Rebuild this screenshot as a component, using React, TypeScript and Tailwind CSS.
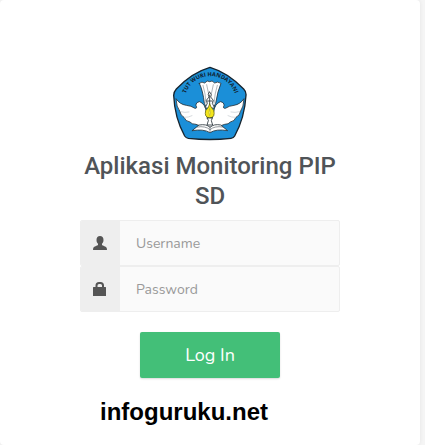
import { useState } from 'react'

function Emblem() {
  return (
    <svg viewBox="21 18 228 225" className="w-[76px] h-[75px]" role="img" aria-label="Tut Wuri Handayani">
      <defs>
        <path id="motto" d="M 62 151 A 78 78 0 1 1 210 151" />
      </defs>
      <path
        d="M135 22 Q189 38 236 87 Q244 95 243 106 Q239 174 209 228 Q206 234 198 235 Q135 242 70 235 Q63 234 59 228 Q29 174 26 106 Q26 96 34 87 Q80 38 135 22 Z"
        fill="#1b8fd8"
        stroke="#17242e"
        strokeWidth="4"
      />
      <text fill="#10202c" fontSize="17" fontWeight="700" fontFamily="'Open Sans', sans-serif" textAnchor="middle">
        <textPath href="#motto" startOffset="50%">TUT WURI HANDAYANI</textPath>
      </text>
      <g fill="#fff" stroke="#27323a" strokeWidth="2.5" strokeLinejoin="round" strokeLinecap="round">
        {/* Tail feathers */}
        <path d="M103 70 Q111 63 119 69 Q127 59 134 65 Q141 59 149 69 Q157 63 168 70 Q158 92 152 130 L145 143 L124 143 L118 130 Q114 92 103 70 Z" />
        <path d="M114 76 Q122 101 123 130 M125 74 L131 102 M145 74 L139 102 M157 76 Q149 101 147 130" fill="none" stroke="#a2a8ad" />
        {/* Wings */}
        <path d="M124 155 Q121 132 104 125 Q92 127 93 137 Q98 145 90 145 Q78 137 64 136 Q44 133 33 116 Q34 141 45 155 Q46 166 57 172 Q61 184 75 186 Q80 193 93 193 Q108 202 135 202 Q162 202 179 193 Q191 193 196 186 Q209 184 213 172 Q225 166 226 155 Q236 141 237 116 Q226 133 207 136 Q193 137 181 145 Q172 145 177 137 Q178 127 166 125 Q149 132 146 155 L142 174 L128 174 Z" />
        <path d="M47 155 Q60 159 72 156 M58 172 Q70 173 81 167 M224 155 Q210 159 198 156 M212 172 Q200 173 189 167" fill="none" stroke="#c3c9cd" strokeWidth="2" />
        {/* Temple and lamp */}
        <path d="M134 96 L139 104 L137 111 L145 121 L142 130 L149 144 L120 144 L127 130 L124 121 L132 111 L130 104 Z" />
        <path d="M134 105 V135 M127 123 H142" fill="none" />
        <path d="M134 132 Q137 142 146 151 Q152 172 134 174 Q117 172 122 152 Q132 143 134 132 Z" fill="#f3e51b" stroke="#6d6b17" />
        <path d="M134 147 Q139 160 134 167 Q129 160 134 147 Z" fill="#fff578" stroke="#aaa018" strokeWidth="1.5" />
        <path d="M127 174 H142 L139 182 L143 195 H126 L130 182 Z" />
        {/* Open book */}
        <path d="M103 195 Q124 191 135 202 Q147 191 167 195 L188 212 Q154 206 135 218 Q115 206 82 212 Z" />
        <path d="M97 201 Q121 197 135 209 Q149 197 173 201 M135 202 V218" fill="none" stroke="#596269" strokeWidth="2" />
      </g>
    </svg>
  )
}

function UserIcon() {
  return (
    <svg viewBox="0 0 14 14" className="w-3.5 h-3.5" fill="#555" aria-hidden="true">
      <path d="M7 0C4.8 0 3.5 1.6 3.5 4C3.5 5.8 4.1 7 5 7.8V9C4.5 9.8 .7 10.3 .2 12.3L0 14H14L13.8 12.3C13.3 10.3 9.5 9.8 9 9V7.8C9.9 7 10.5 5.8 10.5 4C10.5 1.6 9.2 0 7 0Z" />
    </svg>
  )
}

function LockIcon() {
  return (
    <svg viewBox="0 0 14 14" className="w-3.5 h-3.5" fill="#555" aria-hidden="true">
      <path
        fillRule="evenodd"
        d="M2.5 5V3.5Q2.5 0 6 0H7.5Q11 0 11 3.5V5H12.5Q13 5 13 5.5V13.5Q13 14 12.5 14H.5Q0 14 0 13.5V5.5Q0 5 .5 5ZM4.5 5H9V3.5Q9 2 7.5 2H6Q4.5 2 4.5 3.5Z"
      />
    </svg>
  )
}

interface FieldProps {
  id: string
  type: string
  label: string
  value: string
  icon: React.ReactNode
  onChange: (value: string) => void
}

function Field({ id, type, label, value, icon, onChange }: FieldProps) {
  return (
    <div className="flex h-[46px] rounded-xs overflow-hidden border border-[#eee] bg-[#fafafa]">
      <label htmlFor={id} aria-label={label} className="flex w-[39px] shrink-0 items-center pl-3 bg-[#eee]">
        {icon}
      </label>
      <input
        id={id}
        type={type}
        value={value}
        placeholder={label}
        onChange={(e) => onChange(e.target.value)}
        className="min-w-0 flex-1 bg-transparent px-4 pt-0.5 font-['Nunito','Open_Sans',sans-serif] text-sm text-[#555] placeholder-[#999] outline-none"
      />
    </div>
  )
}

export default function App() {
  const [username, setUsername] = useState('')
  const [password, setPassword] = useState('')

  return (
    <div className="min-h-screen bg-[#f5f5f5] pr-[5px]">
      <main className="flex min-h-screen flex-col items-center rounded-sm bg-white px-20 pt-[66px] shadow-[0_0_4px_rgba(0,0,0,0.07)]">
        <Emblem />
        <h1 className="mt-2.5 text-center font-[Roboto,sans-serif] text-2xl leading-[30px] font-medium text-[#505458]">
          Aplikasi Monitoring PIP SD
        </h1>
        <form className="mt-[9px] flex w-full flex-col" onSubmit={(e) => e.preventDefault()}>
          <Field id="username" type="text" label="Username" value={username} icon={<UserIcon />} onChange={setUsername} />
          <Field id="password" type="password" label="Password" value={password} icon={<LockIcon />} onChange={setPassword} />
          <button
            type="submit"
            className="mt-5 h-[46px] w-[140px] self-center rounded-xs bg-[#43bf78] font-['Nunito','Open_Sans',sans-serif] text-lg text-white shadow-[0_1px_2px_rgba(0,0,0,0.15)]"
          >
            Log In
          </button>
        </form>
        <p className="mt-[18px] mr-auto ml-5 font-['Liberation_Sans',sans-serif] text-2xl leading-8 font-bold text-black">
          infoguruku.net
        </p>
      </main>
    </div>
  )
}
